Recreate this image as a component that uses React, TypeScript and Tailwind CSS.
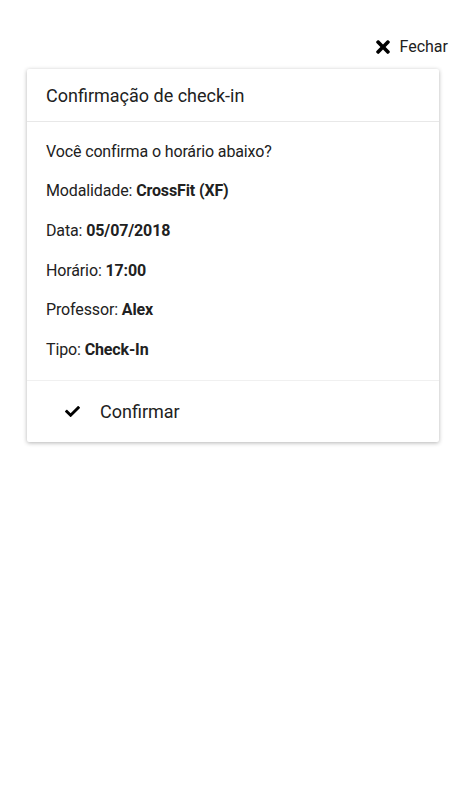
import React from "react";
import { FaTimes, FaCheck } from "react-icons/fa";

export default function App() {
  const rows: [string, string][] = [
    ["Modalidade:", "CrossFit (XF)"],
    ["Data:", "05/07/2018"],
    ["Horário:", "17:00"],
    ["Professor:", "Alex"],
    ["Tipo:", "Check-In"],
  ];
  return (
    <div
      className="min-h-[800px] w-[466px] bg-white text-[#212121]"
      style={{ fontFamily: "Roboto, 'Liberation Sans', sans-serif" }}
    >
      <div className="flex justify-end pt-[36px] pr-[18px] h-[69px]">
        <div className="flex items-center h-[21px]">
          <FaTimes className="w-[14px] h-[20px] text-black" />
          <span className="ml-[10px] text-[16px] leading-[20px]">Fechar</span>
        </div>
      </div>
      <div className="mx-[27px] bg-white rounded-[2px] shadow-[0_1px_4px_rgba(0,0,0,0.3)]">
        <div className="h-[53px] flex items-center px-[19px] border-b border-[#e8e8e8]">
          <span className="text-[18px]">Confirmação de check-in</span>
        </div>
        <div className="pt-[10px] pb-[10px] px-[19px] text-[16px] tracking-[-0.13px]">
          <div className="h-[39.6px] flex items-center">Você confirma o horário abaixo?</div>
          {rows.map(([k, v]) => (
            <div key={k} className="h-[39.6px] flex items-center whitespace-pre">
              <span>{k} </span>
              <span className="font-bold">{v}</span>
            </div>
          ))}
        </div>
        <div className="h-[62px] flex items-center border-t border-[#f0f0f0] pl-[38px]">
          <FaCheck className="w-[15px] h-[15px] text-black" />
          <span className="ml-[20px] text-[18px]">Confirmar</span>
        </div>
      </div>
    </div>
  );
}
